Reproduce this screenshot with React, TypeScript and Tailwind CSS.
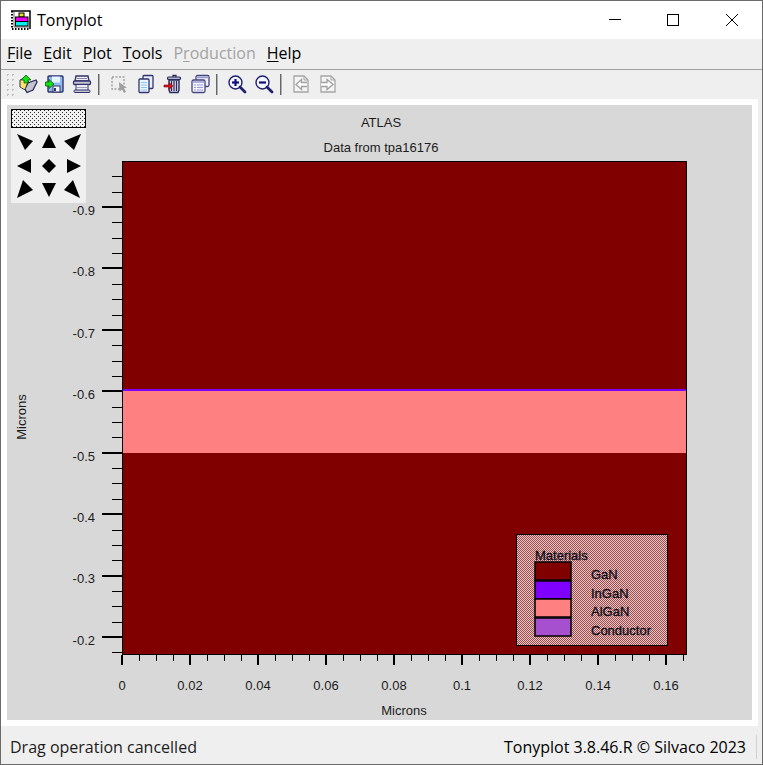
import type { ReactNode } from "react";
import { clsx } from "clsx";

const MENUS = [
  { label: "File", enabled: true },
  { label: "Edit", enabled: true },
  { label: "Plot", enabled: true },
  { label: "Tools", enabled: true },
  { label: "Production", enabled: false, hotkey: 1 },
  { label: "Help", enabled: true },
];

const OpenIcon = (
  <>
    <path d="M2 6 L6 4 L11 8 L11 18 L2 13 Z" fill="#ffe469" stroke="#2b2b5c" />
    <path d="M7 15 L10 9 L18 6 L19 8 L15 16 L9 18.500 Z" fill="#c4c4d0" stroke="#2b2b5c" strokeWidth="1.3" />
    <path d="M3 7 L8 10 L7 15 L3 13 Z" fill="#ffe469" />
    <path d="M8 1 L13 6 H10 V9 H6 V6 H3 Z" fill="#14e014" stroke="#0a5a14" strokeWidth="0.8" />
  </>
);

const SaveIcon = (
  <>
    <rect x="3" y="2" width="15" height="16" rx="1" fill="#8fbcf0" stroke="#33336b" strokeWidth="1.4" />
    <rect x="7" y="2.500" width="8" height="6" fill="#e4f3ff" />
    <rect x="8" y="12" width="7" height="6" fill="#f4f8ff" stroke="#33336b" />
    <path d="M9 14 H11 V17 H9 Z" fill="#33336b" />
    <path d="M0.500 8 H4 V5.500 L9 10 L4 14.500 V12 H0.500 Z" fill="#14e014" stroke="#0a5a14" strokeWidth="0.8" />
  </>
);

const PrintIcon = (
  <>
    <path d="M4 2 H16 L17 7 H3 Z" fill="#f0f0fa" stroke="#33336b" strokeWidth="1.4" />
    <path d="M5 4.500 H15" stroke="#8888ab" />
    <rect x="1.500" y="7" width="17" height="3.500" rx="1" fill="#c4c4d4" stroke="#33336b" strokeWidth="1.3" />
    <path d="M4 11 V17 H16 V11" fill="#ececf6" stroke="#33336b" />
    <path d="M5 13.500 H15" stroke="#9a9ab2" />
    <rect x="2" y="16" width="16" height="2.500" rx="1" fill="#c4c4d4" stroke="#33336b" />
  </>
);

const SelectIcon = (
  <>
    <rect x="3" y="3" width="12" height="12" fill="none" stroke="#a0a0a0" strokeWidth="1.4" strokeDasharray="2 1.500" />
    <path d="M10 8 L18 14 L15 14 L17 18 L15 19 L13 15.500 L10.500 17.500 Z" fill="#a0a0a0" />
  </>
);

const CopyIcon = (
  <>
    <rect x="7" y="1.500" width="10" height="13" rx="1" fill="#e4eefc" stroke="#33336b" strokeWidth="1.3" />
    <rect x="3" y="5" width="10" height="13.500" rx="1" fill="#e9f5ff" stroke="#33336b" strokeWidth="1.3" />
    <path d="M5 8.500 H11 M5 11 H11 M5 13.500 H11 M5 16 H11" stroke="#8fc1ee" />
  </>
);

const TrashIcon = (
  <>
    <path d="M10 3 V1.500 H13 V3" fill="none" stroke="#2b2b5c" strokeWidth="1.3" />
    <rect x="4.500" y="3" width="13" height="2.500" rx="1" fill="#b4b4cc" stroke="#2b2b5c" strokeWidth="1.2" />
    <path d="M6 6 H16 V16 L15 18.500 H7 L6 16 Z" fill="#d7d7e4" stroke="#2b2b5c" strokeWidth="1.4" />
    <path d="M8.500 7 V17 M11 7 V17 M13.500 7 V17" stroke="#2b2b5c" strokeWidth="1.2" />
    <path d="M1 11 H6 V8.500 L10 12 L6 15.500 V13 H1 Z" fill="#d8101c" stroke="#7a0c1a" strokeWidth="0.6" />
  </>
);

const WindowsIcon = (
  <>
    <rect x="6" y="1.500" width="13" height="11" rx="1.500" fill="#efefff" stroke="#44447c" strokeWidth="1.3" />
    <path d="M6.500 3.500 H18.500" stroke="#9a9acb" strokeWidth="1.500" />
    <rect x="2" y="6" width="13" height="12.500" rx="1.500" fill="#f3f3ff" stroke="#44447c" strokeWidth="1.3" />
    <path d="M2.500 8 H14.500" stroke="#9a9acb" strokeWidth="1.500" />
    <path d="M4 11 H6 M7 11 H13 M4 13.500 H6 M7 13.500 H13 M4 16 H6 M7 16 H13" stroke="#9c9cdc" />
  </>
);

const Magnifier = ({ plus }: { plus?: boolean }) => (
  <>
    <circle cx="8.500" cy="8.500" r="6.500" fill="#f4f6ff" stroke="#20206e" strokeWidth="1.400" />
    <path d="M13 13 L18 18" stroke="#20206e" strokeWidth="2.800" strokeLinecap="round" />
    <path d="M5 8.500 H12" stroke="#10107c" strokeWidth="2.200" />
    {plus && <path d="M8.500 5 V12" stroke="#10107c" strokeWidth="2.200" />}
  </>
);

const PageIcon = ({ forward }: { forward?: boolean }) => (
  <>
    <path d="M3 2 H13 L17 6 V18 H3 Z" fill="#f4f4f4" stroke="#a6a6a6" strokeWidth="1.300" />
    <path d="M13 2 V6 H17" fill="none" stroke="#a6a6a6" />
    {forward ? (
      <path d="M3 8.500 H9 V5.500 L15 10.500 L9 15.500 V12.500 H3" fill="#fff" stroke="#a0a0a0" strokeWidth="1.300" />
    ) : (
      <path d="M16 8.500 H10.500 V5.500 L5 10.500 L10.500 15.500 V12.500 H16" fill="#fff" stroke="#a0a0a0" strokeWidth="1.300" />
    )}
  </>
);

const TOOL_GROUPS: { name: string; icon: ReactNode; disabled?: boolean }[][] = [
  [
    { name: "Open", icon: OpenIcon },
    { name: "Save", icon: SaveIcon },
    { name: "Print", icon: PrintIcon },
  ],
  [
    { name: "Select", icon: SelectIcon, disabled: true },
    { name: "Copy", icon: CopyIcon },
    { name: "Delete", icon: TrashIcon },
    { name: "Duplicate", icon: WindowsIcon },
  ],
  [
    { name: "Zoom in", icon: <Magnifier plus /> },
    { name: "Zoom out", icon: <Magnifier /> },
  ],
  [
    { name: "Previous", icon: <PageIcon />, disabled: true },
    { name: "Next", icon: <PageIcon forward />, disabled: true },
  ],
];

const PAD = [
  { name: "Pan up left", points: "6,6 22,13 14,22" },
  { name: "Pan up", points: "13,6 20,20 6,20" },
  { name: "Pan up right", points: "20,6 13,22 3,13" },
  { name: "Pan left", points: "6,13 20,6 20,20" },
  { name: "Reset view", points: "13,6 20,13 13,20 6,13" },
  { name: "Pan right", points: "20,13 6,6 6,20" },
  { name: "Pan down left", points: "12,2 22,12 6,20" },
  { name: "Pan down", points: "6,5 20,5 13,19" },
  { name: "Pan down right", points: "12,2 19,20 3,12" },
];

const MATERIALS = [
  { name: "GaN", color: "#800000" },
  { name: "InGaN", color: "#8000ff" },
  { name: "AlGaN", color: "#ff8080" },
  { name: "Conductor", color: "#a650d0" },
];

// plot area inside the chart's view box
const LEFT = 115;
const RIGHT = 680;
const TOP = 56;
const BOTTOM = 550;

const Y_LABELS = ["-0.9", "-0.8", "-0.7", "-0.6", "-0.5", "-0.4", "-0.3", "-0.2"];
const X_LABELS = ["0", "0.02", "0.04", "0.06", "0.08", "0.1", "0.12", "0.14", "0.16"];

// four steps per label; index 0 is the first labelled tick
const yTicks = Array.from({ length: 32 }, (_, i) => i - 2).map((i) => ({
  y: Math.round(102 + i * 15.36),
  major: i % 4 === 0,
}));
const xTicks = Array.from({ length: 34 }, (_, i) => i).map((i) => ({
  x: Math.round(115 + i * 17),
  major: i % 4 === 0,
}));

function TitleBar() {
  return (
    <header className="flex h-[38px] items-center bg-white pl-[10px]">
      <svg viewBox="0 0 20 20" className="h-5 w-5" aria-hidden="true">
        <rect width="20" height="20" fill="#fff" />
        <path d="M0 1 H19 V19" fill="none" stroke="#000" strokeWidth="1.500" />
        <path d="M1 1 V19 H19" fill="none" stroke="#000" strokeWidth="2" strokeDasharray="1.500 1.500" />
        <path d="M3 2 V17 H18" fill="none" stroke="#000" strokeWidth="0.6" />
        <rect x="8" y="3" width="5" height="4" fill="#e8e020" stroke="#000" />
        <rect x="4.500" y="7" width="12.500" height="4.500" fill="#f000f0" stroke="#000" />
        <rect x="4.500" y="11.500" width="12.500" height="4.500" fill="#00f0f0" stroke="#000" />
      </svg>
      <h1 className="ml-[6px] flex-1 text-[16px] text-black">Tonyplot</h1>
      <div className="flex h-full">
        <button aria-label="Minimize" className="grid w-[58px] place-items-center">
          <svg viewBox="0 0 12 12" className="h-3 w-3" shapeRendering="crispEdges">
            <path d="M0 5.500 H12" stroke="#000" />
          </svg>
        </button>
        <button aria-label="Maximize" className="grid w-[58px] place-items-center">
          <svg viewBox="0 0 12 12" className="h-3 w-3" shapeRendering="crispEdges">
            <rect x="0.5" y="0.5" width="11" height="11" fill="none" stroke="#000" />
          </svg>
        </button>
        <button aria-label="Close" className="grid w-[60px] place-items-center">
          <svg viewBox="0 0 12 12" className="h-3 w-3">
            <path d="M0 0 L12 12 M12 0 L0 12" stroke="#000" />
          </svg>
        </button>
      </div>
    </header>
  );
}

function MenuBar() {
  return (
    <nav className="flex h-[31px] items-center gap-[11px] border-b border-[#a0a0a0] pb-[3px] pl-[6px] text-[16px]">
      {MENUS.map(({ label, enabled, hotkey = 0 }) => (
        <button key={label} disabled={!enabled} className={clsx("leading-5", enabled ? "text-black" : "text-[#a3a3a3]")}>
          {label.slice(0, hotkey)}
          <span className="underline underline-offset-2">{label[hotkey]}</span>
          {label.slice(hotkey + 1)}
        </button>
      ))}
    </nav>
  );
}

function ToolBar() {
  return (
    <div role="toolbar" className="flex h-[29px] items-center pb-[1px] pl-[4px]">
      <div className="h-6 w-[9px] bg-[radial-gradient(#bcbcbc_1px,transparent_1px)] bg-[size:5px_5px]" />
      {TOOL_GROUPS.map((group, i) => (
        <div key={i} className="flex items-center">
          {i > 0 && <div className="mr-[5px] ml-[3px] h-[21px] w-[2px] border-r border-[#b0b0b0] bg-[#666]" />}
          {group.map((tool) => (
            <button key={tool.name} aria-label={tool.name} disabled={tool.disabled} className="grid w-[27px] place-items-center">
              <svg viewBox="0 0 20 20" className="h-5 w-5">
                {tool.icon}
              </svg>
            </button>
          ))}
        </div>
      ))}
    </div>
  );
}

function NavigationPad() {
  return (
    <div className="absolute top-1 left-1 w-[75px] bg-[#f0f0f0]">
      <svg className="block h-[19px] w-full" aria-hidden="true" shapeRendering="crispEdges">
        <defs>
          <pattern id="grip" width="4" height="4" patternUnits="userSpaceOnUse">
            <rect width="4" height="4" fill="#f0f0f0" />
            <rect x="1" y="1" width="1" height="1" fill="#333" />
            <rect x="3" y="3" width="1" height="1" fill="#333" />
          </pattern>
        </defs>
        <rect x="0.5" y="0.5" width="74" height="18" fill="url(#grip)" stroke="#000" />
      </svg>
      <div className="grid grid-cols-3">
        {PAD.map((cell) => (
          <button key={cell.name} aria-label={cell.name} className="h-[25px]">
            <svg viewBox="0 0 25 25" className="h-[25px] w-[25px]">
              <polygon points={cell.points} fill="#000" />
            </svg>
          </button>
        ))}
      </div>
    </div>
  );
}

function Legend() {
  return (
    <g>
      <g shapeRendering="crispEdges">
        <rect x="509" y="429" width="152" height="112" fill="#a84848" />
        <rect x="509" y="429" width="152" height="112" fill="url(#stipple)" />
        <rect x="509.5" y="429.5" width="151" height="111" fill="none" stroke="#000" />
      </g>
      <g fill="#0c0c18" stroke="#0c0c18" strokeWidth="0.3">
        <text x="528" y="455">Materials</text>
        {MATERIALS.map((m, i) => (
          <text key={m.name} x="584" y={474 + Math.round(i * 18.7)}>{m.name}</text>
        ))}
      </g>
      {MATERIALS.map((m, i) => (
        <rect key={m.name} x="528" y={457 + Math.round(i * 18.7)} width="36" height="18" fill={m.color} stroke="#000" strokeWidth="1.500" />
      ))}
    </g>
  );
}

function StructurePlot() {
  return (
    <svg viewBox="0 0 745 615" className="block w-full bg-[#d8d8d8] font-['Liberation_Sans',Arial,sans-serif] text-[13px]" fill="#1c1c1c">
      <defs>
        <pattern id="stipple" width="2" height="2" patternUnits="userSpaceOnUse">
          <rect x="1" width="1" height="1" fill="#dccaca" />
          <rect y="1" width="1" height="1" fill="#dccaca" />
        </pattern>
      </defs>

      <text x="374" y="22" textAnchor="middle">ATLAS</text>
      <text x="374" y="47" textAnchor="middle">Data from tpa16176</text>

      {/* layers */}
      <g shapeRendering="crispEdges">
        <rect x={LEFT} y={TOP} width={RIGHT - LEFT} height={BOTTOM - TOP} fill="#800000" />
        <rect x={LEFT} y="284" width={RIGHT - LEFT} height="2" fill="#8000ff" />
        <rect x={LEFT} y="286" width={RIGHT - LEFT} height="62" fill="#ff8080" />
        <rect x="115.5" y="56.5" width="564" height="493" fill="none" stroke="#000" />
      </g>

      {/* axes */}
      <g fill="#000" shapeRendering="crispEdges">
        {yTicks.map(({ y, major }) => (
          <rect key={y} x={major ? 95 : 105} y={major ? y - 1 : y} width={major ? 20 : 10} height={major ? 2 : 1} />
        ))}
        {xTicks.map(({ x, major }) => (
          <rect key={x} x={major ? x - 1 : x} y={BOTTOM} width={major ? 2 : 1} height={major ? 10 : 6} />
        ))}
      </g>
      {Y_LABELS.map((label, i) => (
        <text key={label} x="88" y={Math.round(110 + i * 61.4)} textAnchor="end">{label}</text>
      ))}
      {X_LABELS.map((label, i) => (
        <text key={label} x={115 + i * 68} y="585" textAnchor="middle">{label}</text>
      ))}
      <text x="397" y="610" textAnchor="middle">Microns</text>
      <text transform="translate(19 312) rotate(-90)" textAnchor="middle">Microns</text>

      <Legend />
    </svg>
  );
}

export default function App() {
  return (
    <div className="flex min-h-screen flex-col border border-[#6a6a6a] bg-[#efefef] font-['Open_Sans','Noto_Sans',sans-serif]">
      <TitleBar />
      <MenuBar />
      <ToolBar />
      <main className="mr-1 bg-white p-[6px]">
        <div className="relative">
          <StructurePlot />
          <NavigationPad />
        </div>
      </main>
      <footer className="flex flex-1 items-center justify-between pt-[4px] pr-[5px] pl-[9px] text-[16px] leading-6 text-[#1c1c1c]">
        <span>Drag operation cancelled</span>
        <span className="border-r border-[#d0d0d0] pr-[10px] font-medium text-black">Tonyplot 3.8.46.R © Silvaco 2023</span>
      </footer>
    </div>
  );
}
